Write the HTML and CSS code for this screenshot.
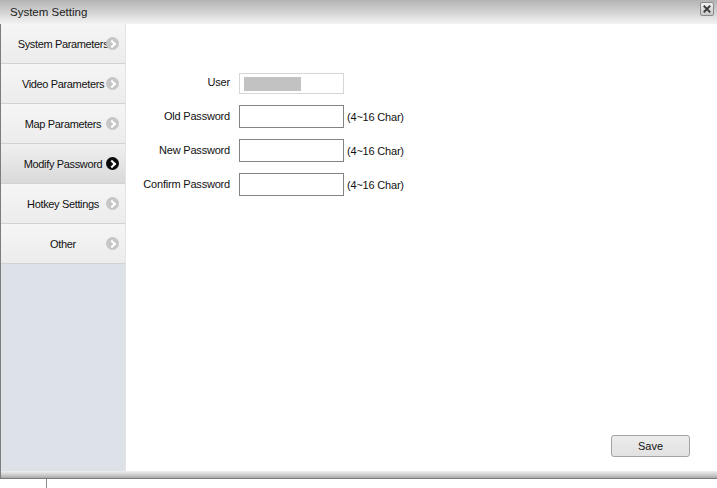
FILE: index.html
```html
<!DOCTYPE html>
<html>
<head>
<meta charset="utf-8">
<link rel="stylesheet" href="styles.css">
</head>
<body>
<div class="window">
  <div class="titlebar">
    <span class="title">System Setting</span>
    <span class="close">
      <svg width="14" height="14" viewBox="0 0 14 14"><path d="M4 4 L10 10 M10 4 L4 10" stroke="#3a3a3a" stroke-width="2.2" stroke-linecap="square"/></svg>
    </span>
  </div>
  <div class="main">
    <div class="sidebar">
      <div class="item"><span>System Parameters</span><i class="arrow"></i></div>
      <div class="item"><span>Video Parameters</span><i class="arrow"></i></div>
      <div class="item"><span>Map Parameters</span><i class="arrow"></i></div>
      <div class="item active"><span>Modify Password</span><i class="arrow"></i></div>
      <div class="item"><span>Hotkey Settings</span><i class="arrow"></i></div>
      <div class="item"><span>Other</span><i class="arrow"></i></div>
    </div>
    <div class="content">
      <div class="form">
        <label class="lbl user-lbl">User</label>
        <div class="box user-box"><div class="masked"></div></div>
        <span></span>
        <label class="lbl">Old Password</label>
        <div class="box"></div>
        <span class="hint">(4~16 Char)</span>
        <label class="lbl">New Password</label>
        <div class="box"></div>
        <span class="hint">(4~16 Char)</span>
        <label class="lbl">Confirm Password</label>
        <div class="box"></div>
        <span class="hint">(4~16 Char)</span>
      </div>
      <div class="footer"><button class="save">Save</button></div>
    </div>
  </div>
  <div class="bottombar"></div>
  <div class="below"><div class="tick"></div></div>
</div>
</body>
</html>
```
FILE: styles.css
```css
html, body { margin: 0; padding: 0; background: #fff; }
body { width: 717px; height: 488px; overflow: hidden; font-family: "Liberation Sans", Arial, sans-serif; font-size: 11px; letter-spacing: -0.2px; color: #111; }
.window { width: 717px; }
.titlebar { height: 24px; display: flex; align-items: center; justify-content: space-between; background: linear-gradient(#b3b3b3, #cfcfcf 45%, #f3f3f3); padding: 0 3px 0 10px; box-sizing: border-box; }
.title { color: #222; font-size: 11.5px; letter-spacing: 0; }
.close { width: 14px; height: 14px; box-sizing: border-box; border: 1px solid #8a8a8a; border-radius: 2px; background: linear-gradient(#f0f0f0, #c8c8c8); display: flex; align-items: center; justify-content: center; margin-top: -6px; }
.close svg { display: block; }
.main { display: flex; height: 447px; }
.sidebar { width: 124px; border-left: 1px solid #7d7d7d; border-right: 1px solid #e4e4e4; background: #dde2e8; display: flex; flex-direction: column; }
.item { position: relative; height: 39px; border-bottom: 1px solid #d2d2d2; background: linear-gradient(#f5f5f5, #ececec); display: flex; align-items: center; justify-content: center; padding-right: 0; }
.item span { color: #111; letter-spacing: -0.35px; }
.item.active { background: linear-gradient(#f0f0f0, #d9d9d9); }
.arrow { position: absolute; right: 6px; top: 13px; width: 13px; height: 13px; border-radius: 50%; background: #c6c6c6; }
.arrow::after { content: ""; position: absolute; left: 3px; top: 4px; width: 4px; height: 4px; border-right: 2px solid #fff; border-bottom: 2px solid #fff; transform: rotate(-45deg); }
.item.active .arrow { background: #0a0a0a; }
.content { flex: 1; display: flex; flex-direction: column; background: #fff; padding-top: 49px; }
.form { display: grid; grid-template-columns: 104px 105px auto; column-gap: 9px; row-gap: 11px; align-items: center; }
.lbl { text-align: right; color: #111; margin-top: -1px; }
.user-lbl { margin-top: -3px; }
.box { height: 23px; box-sizing: border-box; border: 1px solid #838383; background: #fff; }
.user-box { height: 21px; border-color: #d6d6d6; padding: 3px 0 0 4px; }
.masked { width: 57px; height: 14px; background: #c2c2c2; }
.hint { margin-left: -6px; color: #111; }
.footer { margin-top: auto; display: flex; justify-content: flex-end; padding: 0 27px 14px 0; }
.save { width: 79px; height: 22px; border: 1px solid #a3a3a3; border-radius: 3px; background: linear-gradient(#ececec, #e2e2e2); font-family: "Liberation Sans", Arial, sans-serif; font-size: 11px; color: #111; padding: 0; }
.bottombar { height: 7px; border-left: 1px solid #7d7d7d; border-bottom: 1px solid #7a7a7a; background: linear-gradient(#f0f0f0, #c9c9c9 60%, #a9a9a9); }
.below { height: 9px; position: relative; }
.tick { position: absolute; left: 46px; top: 0; width: 1px; height: 9px; background: #8a8a8a; }
```
